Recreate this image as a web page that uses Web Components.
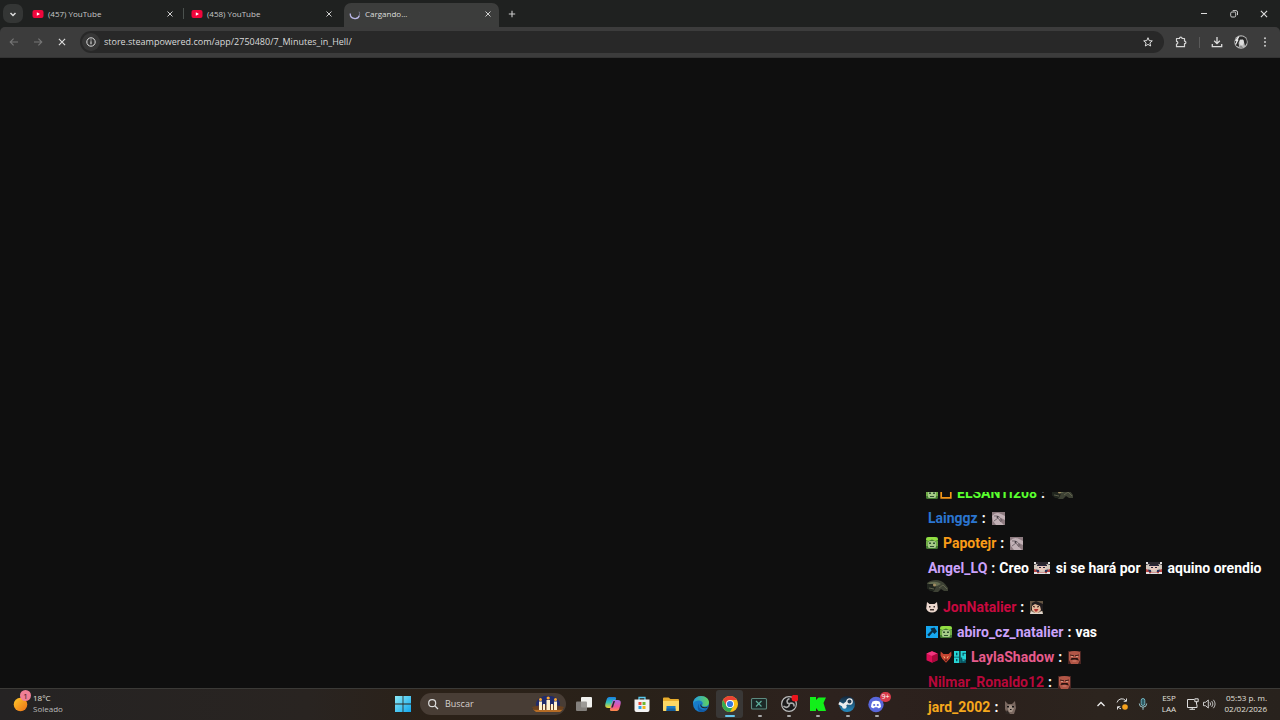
<!DOCTYPE html>
<html lang="es">
<head>
<meta charset="utf-8">
<title>Cargando...</title>
<style>
html,body{margin:0;height:100%}
body{font-family:"Open Sans","Noto Sans",sans-serif;background:#0f0f0f;overflow:hidden}
</style>
</head>
<body>
<desktop-screen></desktop-screen>
<script>
const G = {
  down:['0 0 12 12','<path d="M3.5 5 6 7.5 8.500 5" fill="none" stroke="#ddd" stroke-width="1.500"/>'],
  up:['0 0 12 12','<path d="M2.500 8 6 4.500 9.500 8" fill="none" stroke="#eee" stroke-width="1.300"/>'],
  youtube:['0 0 12 12','<rect x="0.500" y="2" width="11" height="8" rx="2" fill="#f0063c"/><path d="M4.800 4.200v3.600L8 6z" fill="#fff"/>'],
  close:['0 0 8 8','<path d="M1.500 1.500l5 5M6.500 1.500l-5 5" stroke="#d0d0d0" stroke-width="1"/>'],
  plus:['0 0 10 10','<path d="M5 1.800v6.400M1.800 5h6.400" stroke="#ccc" stroke-width="1.100"/>'],
  spin:['0 0 12 12','<path d="M1.300 5.500A4.700 4.700 0 0 0 10.400 7.500" fill="none" stroke="#b9b6e6" stroke-width="1.300"/><path d="M10.400 7.500a4.700 4.700 0 0 0-.3-3.800" fill="none" stroke="#77758e" stroke-width="1"/>'],
  min:['0 0 12 12','<path d="M3 5.500h6" stroke="#ddd"/>'],
  restore:['0 0 12 12','<rect x="2.700" y="4" width="5" height="5" rx="1.200" fill="none" stroke="#ccc"/><path d="M4.700 2.600h3.300a1.500 1.500 0 0 1 1.500 1.500v3" fill="none" stroke="#ccc"/>'],
  x:['0 0 12 12','<path d="M2.900 2.900l6.200 6.200M9.100 2.900 2.900 9.100" stroke="#e0e0e0" stroke-width="1.100"/>'],
  back:['0 0 12 12','<path d="M10 6H2.500M5.600 2.600 2.200 6l3.400 3.400" fill="none" stroke="#767676" stroke-width="1.100"/>'],
  fwd:['0 0 12 12','<path d="M2 6h7.500M6.400 2.600 9.800 6 6.400 9.400" fill="none" stroke="#767676" stroke-width="1.100"/>'],
  info:['0 0 12 12','<circle cx="6" cy="6" r="4.200" fill="none" stroke="#ddd"/><path d="M6 5.300v3M6 3.400v1.100" stroke="#ddd" stroke-width="1.100"/>'],
  star:['0 0 12 12','<path d="m6 1.700 1.200 2.900 3.100.3-2.400 2 .8 3.100L6 8.400 3.300 10l.8-3.100-2.400-2 3.100-.3z" fill="none" stroke="#ddd"/>'],
  puzzle:['0 0 12 12','<path d="M1.500 2.500h3c0-1.800 2.600-1.800 2.600 0h2.400v2.600c1.900 0 1.900 2.600 0 2.600v3h-8V8c1.800 0 1.800-2.700 0-2.700z" fill="none" stroke="#d6d6d6" stroke-width="1.200" stroke-linejoin="round"/>'],
  dl:['0 0 12 12','<path d="M6 1v6.500M3.200 4.800 6 7.600l2.800-2.800M1.300 8v2.600h9.400V8" fill="none" stroke="#ddd" stroke-width="1.300"/>'],
  avatar:['0 0 14 14','<circle cx="7" cy="7" r="6.700" fill="#b9b9b9"/><path d="M1 8C.8 3 5 1 8.500 1.600c3.500.7 4.800 4 4.300 6.500L11 11l-1.500-6L6 4.500 4.500 8l.7 4L2 10.500z" fill="#292929"/><path d="m6 5 3-.5 1 3-1.500 3H6.700L5.500 8z" fill="#ddd"/><path d="m5 12.500 2-2.300 2.500 3z" fill="#888"/><path d="m1.500 6 3.200-4M1.500 9.500 4 4.500" stroke="#eee" stroke-width="1.300"/>'],
  menu:['0 0 12 12','<g fill="#ccc"><circle cx="6" cy="2.200" r="1"/><circle cx="6" cy="6" r="1"/><circle cx="6" cy="9.800" r="1"/></g>'],
  sun:['0 0 24 24','<defs><linearGradient id="s" x1="0" y1="0" x2="1" y2="1"><stop offset="0" stop-color="#ffc92b"/><stop offset="1" stop-color="#ec7016"/></linearGradient></defs><circle cx="9.500" cy="12.500" r="6.800" fill="url(#s)"/>'],
  win:['0 0 16 16','<defs><linearGradient id="w" x1="0" y1="0" x2="1" y2="1"><stop offset="0" stop-color="#8ce9f6"/><stop offset="1" stop-color="#12a7ed"/></linearGradient></defs><path d="M0 0h7.600v7.600H0zM8.400 0H16v7.600H8.400zM0 8.400h7.600V16H0zM8.400 8.400H16V16H8.400z" fill="url(#w)"/>'],
  lens:['0 0 12 12','<circle cx="5.200" cy="5.200" r="3.500" fill="none" stroke="#ddd" stroke-width="1.200"/><path d="m8 8 3 3" stroke="#ddd" stroke-width="1.300"/>'],
  candles:['0 0 32 18','<ellipse cx="16" cy="9" rx="12" ry="8.300" fill="#202b6b"/><path d="M1 14.500h30l-3 2.500H4z" fill="#b56c25"/><path d="M0 12q16-5 32 0l-2 3H2z" fill="#754419" opacity=".8"/><g fill="#fff0cf"><path d="M7 6.500h3V15H7zM14.500 5h3.500v10h-3.500zM22 6.500h3V15h-3z"/><path d="M11 9h2v6h-2zM19 9h2v6h-2z"/></g><g fill="#ffab33"><circle cx="8.500" cy="4.500" r="1.500"/><circle cx="16.200" cy="3" r="1.600"/><circle cx="23.500" cy="4.500" r="1.500"/></g>'],
  task:['0 0 18 18','<rect x="6" y="2" width="11" height="10.500" rx="1" fill="#f1f1ee"/><rect x="1" y="6.500" width="11" height="9.500" rx="1" fill="#8f8d8a" fill-opacity=".88"/>'],
  copilot:['0 0 18 18','<defs><linearGradient id="a" x1="0" y1="0" x2="0" y2="1"><stop offset="0" stop-color="#197ee5"/><stop offset=".5" stop-color="#34c3b4"/><stop offset="1" stop-color="#f2d42a"/></linearGradient><linearGradient id="b" x1="0" y1="0" x2="0" y2="1"><stop offset="0" stop-color="#a36de7"/><stop offset=".6" stop-color="#ef539b"/><stop offset="1" stop-color="#ff8c45"/></linearGradient></defs><path d="M6 2h4.500c2 0 1.800 1 1.300 2.500L9 13H4c-3.300 0-3-3-2.400-5l1.200-4C3.400 2.600 4.400 2 6 2z" fill="url(#a)"/><path d="M9 5h5c3.300 0 3 3 2.400 5l-1.200 4c-.6 1.400-1.600 2-3.200 2H7.500c-2 0-1.800-1-1.300-2.500z" fill="url(#b)"/><path d="m9.500 6-2.300 6.500h1.700L11 6z" fill="#29272b"/>'],
  store:['0 0 18 18','<path d="M6 5V2.500h6V5" fill="none" stroke="#5ac9ef" stroke-width="1.300"/><path d="M1.500 4.500h15V15a2 2 0 0 1-2 2h-11a2 2 0 0 1-2-2z" fill="#f3f3f3"/><path fill="#e94a38" d="M5.500 7h3v3h-3z"/><path fill="#6eb72f" d="M9.500 7h3v3h-3z"/><path fill="#2c9fe3" d="M5.500 11h3v3h-3z"/><path fill="#f0b51b" d="M9.500 11h3v3h-3z"/>'],
  folder:['0 0 18 18','<path d="M1 3.500a1 1 0 0 1 1-1h4.500L8.500 4H16a1 1 0 0 1 1 1v10a1 1 0 0 1-1 1H2a1 1 0 0 1-1-1z" fill="#e9ad2c"/><path d="M1 6h16v9a1 1 0 0 1-1 1H2a1 1 0 0 1-1-1z" fill="#fbd765"/><path d="M4.500 11h9v5h-9z" fill="#1979c3"/><path d="M4.500 13.500h9V16h-9z" fill="#145e9d"/>'],
  edge:['0 0 18 18','<defs><linearGradient id="e" x1="0" y1="0" x2="1" y2="0"><stop offset="0" stop-color="#239be1"/><stop offset="1" stop-color="#62d45b"/></linearGradient></defs><circle cx="9" cy="9" r="8" fill="#187cc9"/><path d="M1 9C1.200 4 5 1 9 1c5 0 8 3.200 8 6.300 0 3-2.300 4.300-5 4.200-1.600 0-2.400-.8-1.700-1.700C12 7.500 9 5 6 5.500 3.700 5.800 1.700 7 1 9z" fill="url(#e)"/><path d="M7 8.500c-1 3 1 6 4.500 6.200 1.800 0 3.500-.6 4.500-1.500-1 2-3.500 3.800-6.700 3.800C5.500 17 4.800 11 7 8.500z" fill="#115aa5"/><path d="M9.800 8.300c-1.300 1-.8 3.800 2.800 4 1.500.1 3-.4 3.700-.8-.8 1-2 2-4 1.800-3.500-.1-5.300-3.400-2.500-5z" fill="#26241f"/>'],
  chrome:['0 0 18 18','<circle cx="9" cy="9" r="8" fill="#fbc116"/><path d="M9 5h6.900A8 8 0 0 0 2.100 5L5.500 11z" fill="#e94235"/><path d="M5.500 11 2.100 5A8 8 0 0 0 9 17l3.400-6z" fill="#34a853"/><circle cx="9" cy="9" r="4" fill="#fff"/><circle cx="9" cy="9" r="3.100" fill="#3478df"/>'],
  xbox:['0 0 18 18','<rect x="1.500" y="3.500" width="15" height="10.500" rx="1" fill="#1b2826" stroke="#5d8b80" stroke-width="1.100"/><path d="m6 6 5.500 5.500M11.500 6 6 11.500" stroke="#5fae9b" stroke-width="1.200"/>'],
  obs:['0 0 18 18','<circle cx="9" cy="9" r="7.400" fill="#1a191a" stroke="#bbb" stroke-width="1.200"/><g fill="none" stroke="#aaa" stroke-width="1.600"><path d="M9.500 3.500Q6 5 7.500 8l2.500 1M3.500 11q3 2.500 5.200.3L9.500 9M14 11.500q.5-3.500-3-3.500L9 9"/></g><circle cx="15" cy="3" r="3.500" fill="#ec151c"/>'],
  kick:['0 0 18 18','<path d="M1 2h6v3l2.500-2.500H17L14.500 8l2.500 8h-7.500L7 13v3H1z" fill="#12ef1a"/>'],
  steam:['0 0 18 18','<defs><linearGradient id="t" x1="0" y1="0" x2="0" y2="1"><stop offset="0" stop-color="#142437"/><stop offset="1" stop-color="#278cc1"/></linearGradient></defs><circle cx="9" cy="9" r="8" fill="url(#t)"/><path d="m1 8 4.500 2.500L10 7" fill="none" stroke="#eee" stroke-width="3"/><circle cx="11.500" cy="6.500" r="2.700" fill="#233b50" stroke="#eee" stroke-width="1.300"/><circle cx="6.400" cy="11.500" r="2.300" fill="#e9eef1"/>'],
  discord:['0 0 18 18','<circle cx="9" cy="9.500" r="7.700" fill="#5967db"/><path d="M5.500 6.500q3.500-1.500 7 0 1.500 2.500 1.500 5.500-1.500 1.200-3 1.200l-.6-1H7.600l-.6 1q-1.500 0-3-1.200 0-3 1.500-5.500z" fill="#fff"/><circle cx="7.200" cy="10" r="1.100" fill="#5967db"/><circle cx="10.800" cy="10" r="1.100" fill="#5967db"/>'],
  sync:['0 0 14 14','<path d="M2 5.500A5 5 0 0 1 11 4M11.500 1.500V4.300H8.700M2.500 12.500V9.700h2.800M3 10a5 5 0 0 0 3 1.800" fill="none" stroke="#ddd"/><circle cx="10" cy="10" r="2.800" fill="#f7a11c"/>'],
  mic:['0 0 14 14','<rect x="5.200" y="1.500" width="3.600" height="7" rx="1.800" fill="#2d5962" stroke="#77bcc8" stroke-width=".9"/><path d="M3.300 6.500a3.700 3.700 0 0 0 7.400 0M7 10.200v2.600" fill="none" stroke="#9cc6cc"/>'],
  net:['0 0 14 14','<path d="M8 2.500H1.500v8H11V7.500M3.500 12.300h5.500M6.200 10.500v2" fill="none" stroke="#ddd"/><path d="M8.800 1.800h3.400v2.900H8.800zM10.500 4.700v3" fill="#332b25" stroke="#ddd"/>'],
  vol:['0 0 14 14','<path d="M1.500 5.300h2L6.300 3v8L3.500 8.700h-2z" fill="none" stroke="#ddd" stroke-width=".9"/><path d="M8 5.300q1.300 1.700 0 3.400M9.700 4q2.500 3 0 6M11.400 2.800q3.400 4.200 0 8.400" fill="none" stroke="#ccc" stroke-width=".9"/>'],
  creeper:['0 0 12 12','<rect width="12" height="12" rx="1.500" fill="#447b32"/><path d="M0 3Q0 0 3 0h6q3 0 3 3L9 4 6 2.500 2.500 4z" fill="#92df43"/><rect x="2" y="4" width="8" height="7" rx="1.500" fill="#a5ca88"/><path d="M3 5.500h2V7H3zM7 5.500h2V7H7zM4 9h4v1H4z" fill="#315332"/><path d="M1 4v5M11 4v5" stroke="#9be05a" stroke-width="1"/>'],
  crown:['0 0 12 12','<path d="M1.200 1v9.800h9.600V1" fill="none" stroke="#f29618" stroke-width="1.700"/>'],
  hammer:['0 0 12 12','<path fill="#16a6ef" d="M0 0h12v12H0z"/><path d="m4.500 2.500 4-1 2.500 4-2.500 2.500-1.800-1.700L3 10.500 1.300 8.800 5.500 4.500z" fill="#082d43"/>'],
  mask:['0 0 12 12','<path d="M1 1 3.500 3h5L11 1l.8 6.500Q10.500 11.500 6 11.500T.2 7.500z" fill="#ecd8ce"/><path d="M3 5h1.500v1.500H3zM7.500 5H9v1.500H7.500zM4 8h4v1.500H4z" fill="#40342f"/>'],
  cube:['0 0 12 12','<path d="m6 .3 5.500 2.200v6.800L6 11.800.5 9.300V2.500z" fill="#db0d55"/><path d="m6 .3 5.500 2.200L6 5 .5 2.500z" fill="#f0367e"/><path d="M6 5v6.800l5.500-2.500V2.500z" fill="#a9083c"/>'],
  devil:['0 0 12 12','<path d="M.7.500 3.500 3h5L11.300.5l.2 4-1.700 3.300L6 11.700 2.200 7.800.5 4.500z" fill="#c44431"/><path d="m3 5 2 1v1.500zM9 5 7 6v1.500z" fill="#ffd28b"/><path d="M4.500 8.500h3L6 10.500z" fill="#461713"/>'],
  og:['0 0 12 12','<path d="M0 0h5.300v12H0zM6.500 0H12v12H6.500z" fill="#26d5d5"/><path d="M2 1.700h1.400v2.600H2zM8.500 1.700H12v1H9.700v2h-1.200zM0 5.700h5.300v.8H0zM2 8h1.400v2.300H2zM6.500 6.500h1.700v2H12V12H6.500z" fill="#075260"/><path d="M8.500 9.700h2" stroke="#26b5ba"/>'],
  frog:['0 0 22 14','<path d="M1 4C6 0 15 0 19 5l3 4v3h-4l-3-2-3 3H8L1 9z" fill="#3d4134"/><path d="M2 4q8-3 13 1l-4 2-7-1z" fill="#646b50"/><path d="M1 5h6l3 3-2 4H4L1 9z" fill="#20251e"/><circle cx="8.500" cy="6" r="1.500" fill="#a28d63"/><path d="m13 9 4-3 4 4M3 9l5 1" stroke="#6a6b54" stroke-width=".8" fill="none"/>'],
  horse:['0 0 13 13','<path fill="#8d7b80" d="M0 0h13v13H0z"/><path d="M0 4Q4-1 9 2l4 2v4l-4-2-2 2 5 5H4L1 9z" fill="#c2b1b6"/><path d="M2 4q6-1 8 5M2 9l4-3 3 4" stroke="#635960" fill="none" stroke-width=".8"/><circle cx="5.500" cy="5" r="1" fill="#403a3f"/>'],
  ref:['0 0 16 14','<path fill="#d0c6bb" d="M0 1h3l2 3h6l2-3h3v12H0z"/><path d="M0 1h16v3l-3-1-2 2H5L3 3 0 4z" fill="#29252c"/><path d="M0 1h2v2H0zM14 1h2v2h-2z" fill="#ddd"/><path d="m0 8 3 1 3 2h4l3-2 3-1v4H0z" fill="#b74440"/><path d="M4 4h8v4l-4 2-4-2z" fill="#e8c8bd"/><path d="M3 4.500h10M5 6.500h2M9 6.500h2" stroke="#25243a" stroke-width="1.200"/><path d="M2 8.500 5 9v2H3zM14 8.500 11 9v2h2z" fill="#26345f"/><path d="M0 11h3v2H0zM13 11h3v2h-3zM5 11.500h6V13H5z" fill="#e4e2e5"/>'],
  girl:['0 0 13 13','<path fill="#645543" d="M0 0h13v13H0z"/><path d="M1 9 2 2l4-2 7 3v7z" fill="#201b1d"/><path d="m2 5 3-2 5 2 1 4-3 3H5L2 9z" fill="#e2b799"/><path d="M3 5.500 5 6M7 6l2-.5" stroke="#301d1c"/><path d="M4 8h4.500L7 10.500H5z" fill="#b33131"/><path d="m0 13 1-3 4 2h3l4-2 1 3z" fill="#dfd5cb"/>'],
  man:['0 0 13 13','<path fill="#4a2522" d="M0 0h13v13H0z"/><path d="M1 1q5.500-2 11 0v8l-2 4H3L1 9z" fill="#b15646"/><path d="m2 4 4 .8M7 4.800 11 4" stroke="#361715" stroke-width=".9"/><path d="m2.500 9 1-2h6l1.500 2.500-4-1z" fill="#29120f"/><path d="M3 5.500h2M8 5.500h2" stroke="#ddb198" stroke-width=".7"/><path d="M4.500 9.500h4v1h-4z" fill="#d98370"/>'],
  cat:['0 0 13 13','<path d="m1 0 3 3h4l3-3 1 7-2 6H3L1 8z" fill="#7a6860"/><path d="m3 5 4-1 3 3-2 4H5z" fill="#a49387"/><path d="M3 5h2v1.500H3zM8 5h2v1.500H8zM6 8h1.500v1H6z" fill="#171415"/><path d="m1 13 2-4 3 4z" fill="#2e2723"/>']
};

class UiIcon extends HTMLElement{
  connectedCallback(){
    const [box,body]=G[this.getAttribute('name')];
    this.attachShadow({mode:'open'}).innerHTML=`<style>:host{display:inline-block;flex:none;width:var(--w,12px);height:var(--h,12px)}svg{display:block;width:100%;height:100%}</style><svg viewBox="${box}" aria-hidden="true">${body}</svg>`;
  }
}
customElements.define('ui-icon',UiIcon);

const define=(tag,css,html)=>customElements.define(tag,class extends HTMLElement{
  connectedCallback(){
    if(this.shadowRoot)return;
    this.attachShadow({mode:'open'}).innerHTML=`<style>*{box-sizing:border-box}button{font:inherit;color:inherit;background:none;border:0;padding:0;display:flex;align-items:center;justify-content:center}${css}</style>${typeof html==='function'?html(this):html}`;
  }
});

define('browser-tab',`
:host{display:block;width:159px;height:24px;position:relative;color:#c9c9c9;border-radius:7px 7px 0 0}
:host([active]){background:#3c3d3c;color:#ddd;width:155px;margin-left:1px}
.t{display:flex;align-items:center;height:21px;padding:0 10px 0 7px}
:host([active]) .t{padding:0 7px 0 5px}
.label{flex:1;margin-left:4px;font-size:8px;line-height:12px;white-space:nowrap;text-align:left}
button{width:8px;height:8px}ui-icon{--w:12px;--h:12px}button ui-icon{--w:8px;--h:8px}
:host([line])::after{content:"";position:absolute;right:0;top:5px;width:1px;height:11px;background:#4b514e}`,
e=>`<div class="t"><ui-icon name="${e.getAttribute('icon')}"></ui-icon><span class="label"><slot></slot></span><button aria-label="Cerrar"><ui-icon name="close"></ui-icon></button></div>`);

define('tab-strip',`
:host{display:flex;align-items:flex-end;height:27px;background:#1f2120;padding-left:3px}
.list{width:20px;height:19px;border-radius:7px;background:#343635;align-self:center;margin-right:2px}
.add{width:24px;height:24px;padding-bottom:3px;margin-left:1px}.add ui-icon{--w:10px;--h:10px}
.win{display:flex;margin-left:auto;padding-right:1px;align-self:stretch}.win button{width:30px;height:27px}`,
`<button class="list" aria-label="Buscar pestañas"><ui-icon name="down"></ui-icon></button>
<browser-tab icon="youtube" line>(457) YouTube</browser-tab><browser-tab icon="youtube">(458) YouTube</browser-tab><browser-tab icon="spin" active>Cargando...</browser-tab>
<button class="add" aria-label="Nueva pestaña"><ui-icon name="plus"></ui-icon></button>
<div class="win"><button aria-label="Minimizar"><ui-icon name="min"></ui-icon></button><button aria-label="Restaurar"><ui-icon name="restore"></ui-icon></button><button aria-label="Cerrar ventana"><ui-icon name="x"></ui-icon></button></div>`);

define('address-bar',`
:host{display:flex;align-items:center;height:31px;padding:0 3px 0 2px;background:#3c3c3c;border-radius:5px 5px 0 0;border-bottom:1px solid #333}
button{width:24px;height:24px;flex:none}
form{display:flex;align-items:center;flex:1;height:22px;margin:0 5px 0 6px;border-radius:11px;background:#282828;padding:0 4px 0 2px}
.info{width:18px;height:18px;border-radius:9px;background:#373737}
input{flex:1;min-width:0;border:0;outline:0;background:none;color:#dadada;font:9px/18px "Open Sans","Noto Sans",sans-serif;padding:0;margin-left:4px}
hr{width:1px;height:11px;border:0;background:#5a5a5a;margin:0 5px 0 6px}
.me{--w:14px;--h:14px}`,
`<button aria-label="Atrás"><ui-icon name="back"></ui-icon></button><button aria-label="Adelante"><ui-icon name="fwd"></ui-icon></button><button aria-label="Detener"><ui-icon name="x"></ui-icon></button>
<form><button type="button" class="info" aria-label="Información del sitio"><ui-icon name="info"></ui-icon></button><input aria-label="Dirección" value="store.steampowered.com/app/2750480/7_Minutes_in_Hell/"><button type="button" aria-label="Favorito"><ui-icon name="star"></ui-icon></button></form>
<button aria-label="Extensiones"><ui-icon name="puzzle"></ui-icon></button><hr><button aria-label="Descargas"><ui-icon name="dl"></ui-icon></button><button class="me" aria-label="Perfil"><ui-icon name="avatar"></ui-icon></button><button aria-label="Menú"><ui-icon name="menu"></ui-icon></button>`);

define('chat-message',`
:host{display:block;flex:none;line-height:25px;color:#fff}
.b{display:inline-flex;gap:2px;margin-right:3px;vertical-align:-1px}.b:empty{display:none}
b{font-weight:inherit;margin-left:2px}.c{margin:0 4px}
::slotted(ui-icon){vertical-align:-2px;margin:0 2px;--w:13px;--h:13px}
::slotted(ui-icon.wide){--w:22px;--h:14px}
::slotted(ui-icon.ref){--w:16px;--h:14px}
::slotted(ui-icon.line){display:block;height:14px;margin:-2px 0 2px}`,
e=>`<span class="b">${(e.getAttribute('badges')||'').split(' ').filter(Boolean).map(n=>`<ui-icon name="${n}"></ui-icon>`).join('')}</span><b style="color:${e.getAttribute('color')}">${e.getAttribute('user')}</b><span class="c">:</span><slot></slot>`);

define('chat-overlay',`
:host{display:flex;flex-direction:column;justify-content:flex-end;overflow:hidden;width:354px;height:228px;padding-right:12px;font:700 14px Roboto,sans-serif}`,
`<chat-message badges="creeper crown" user="ELSANTI208" color="#5aff2e"><ui-icon class="wide" name="frog"></ui-icon></chat-message>
<chat-message user="Lainggz" color="#2b75d0"><ui-icon name="horse"></ui-icon></chat-message>
<chat-message badges="creeper" user="Papotejr" color="#fa9c18"><ui-icon name="horse"></ui-icon></chat-message>
<chat-message user="Angel_LQ" color="#cba2fb">Creo <ui-icon class="ref" name="ref"></ui-icon> si se hará por <ui-icon class="ref" name="ref"></ui-icon> aquino orendio<ui-icon class="wide line" name="frog"></ui-icon></chat-message>
<chat-message badges="mask" user="JonNatalier" color="#c9093f"><ui-icon name="girl"></ui-icon></chat-message>
<chat-message badges="hammer creeper" user="abiro_cz_natalier" color="#cba2fb">vas</chat-message>
<chat-message badges="cube devil og" user="LaylaShadow" color="#e75b8c"><ui-icon name="man"></ui-icon></chat-message>
<chat-message user="Nilmar_Ronaldo12" color="#b7083a"><ui-icon name="man"></ui-icon></chat-message>
<chat-message user="jard_2002" color="#f5a81c"><ui-icon name="cat"></ui-icon></chat-message>`);

define('task-app',`
:host{display:block;position:relative;width:27px;height:28px;border-radius:3px;--w:18px;--h:18px}
:host([active]){background:#393736}
button{width:100%;height:100%}
:host([running])::after,:host([active])::after{content:"";position:absolute;bottom:1px;left:12px;width:4px;height:2px;border-radius:1px;background:#aaa}
:host([active])::after{left:9px;width:10px;background:#65c6ee}
span{position:absolute;top:2px;right:-1px;width:11px;height:10px;border-radius:5px;background:#d83b4b;color:#fff;font-size:7px;line-height:10px;text-align:center}`,
e=>`<button aria-label="${e.getAttribute('label')}"><ui-icon name="${e.getAttribute('icon')}"></ui-icon></button>${e.hasAttribute('count')?`<span>${e.getAttribute('count')}</span>`:''}`);

define('task-bar',`
:host{display:grid;box-sizing:border-box;grid-template-columns:1fr auto 1fr;align-items:center;height:32px;padding-bottom:1px;border-top:1px solid #3b3a37;background:linear-gradient(90deg,#252323,#292421 24%,#2b2118 34%,#292119 50%,#2d221e 65%,#2b201c 75%,#2c241e 86%,#28221d);color:#e2e0de;font-size:8px;line-height:11px}
.weather{display:flex;align-items:center;justify-self:start;padding-left:11px;text-align:left;position:relative;--w:24px;--h:24px}
.weather .n{position:absolute;left:20px;top:-2px;width:11px;height:11px;border-radius:6px;background:#ef7f96;color:#3c141b;text-align:center}
.weather div{margin-left:-2px;padding-bottom:2px}.weather small{display:block;font-size:8px;color:#bbb}
.apps,.pins{display:flex;align-items:center;gap:2px}
.pins{width:320px;gap:0;justify-content:space-between}
.start{width:26px;height:28px;--w:16px;--h:16px}
form{display:flex;align-items:center;width:146px;height:22px;border-radius:11px;background:#483d35;margin:0 2px;padding-left:7px}
input{flex:1;min-width:0;border:0;outline:0;background:none;color:#ddd;font:9px/18px "Open Sans","Noto Sans",sans-serif;padding:0;margin-left:6px}
input::placeholder{color:#d5d1ce;opacity:1}
.hl{--w:32px;--h:18px;margin-right:2px}
.tray{display:flex;align-items:center;justify-self:end;padding-right:13px;--w:14px;--h:14px}
.tray button{width:21px;height:28px}.tray .s{width:16px}.tray .chev{--w:12px;--h:12px}
.tray .lang{display:block;width:32px;text-align:center}.tray .clock{display:block;width:50px;text-align:right}
.tray .lang,.tray .clock{padding-bottom:2px}`,
`<button class="weather"><ui-icon name="sun"></ui-icon><span class="n">1</span><div>18°C<small>Soleado</small></div></button>
<div class="apps"><button class="start" aria-label="Inicio"><ui-icon name="win"></ui-icon></button>
<form><ui-icon name="lens"></ui-icon><input aria-label="Buscar" placeholder="Buscar"><ui-icon class="hl" name="candles"></ui-icon></form>
<div class="pins"><task-app icon="task" label="Vista de tareas"></task-app><task-app icon="copilot" label="Copilot"></task-app><task-app icon="store" label="Store"></task-app><task-app icon="folder" label="Archivos"></task-app><task-app icon="edge" label="Edge"></task-app><task-app icon="chrome" label="Chrome" active></task-app><task-app icon="xbox" label="Xbox" running></task-app><task-app icon="obs" label="OBS" running></task-app><task-app icon="kick" label="Kick" running></task-app><task-app icon="steam" label="Steam" running></task-app><task-app icon="discord" label="Discord" count="9+" running></task-app></div></div>
<div class="tray"><button class="chev" aria-label="Mostrar iconos"><ui-icon name="up"></ui-icon></button><button aria-label="Actualizar"><ui-icon name="sync"></ui-icon></button><button aria-label="Micrófono"><ui-icon name="mic"></ui-icon></button><button class="lang">ESP<br>LAA</button><button class="s" aria-label="Red"><ui-icon name="net"></ui-icon></button><button class="s" aria-label="Volumen"><ui-icon name="vol"></ui-icon></button><button class="clock">05:53 p. m.<br>02/02/2026</button></div>`);

define('desktop-screen',`
:host{display:flex;flex-direction:column;height:100vh;position:relative}
header{background:#1f2120}main{flex:1}
chat-overlay{position:absolute;right:0;bottom:0}`,
`<header><tab-strip></tab-strip><address-bar></address-bar></header><main></main><task-bar></task-bar><chat-overlay></chat-overlay>`);
</script>
</body>
</html>
